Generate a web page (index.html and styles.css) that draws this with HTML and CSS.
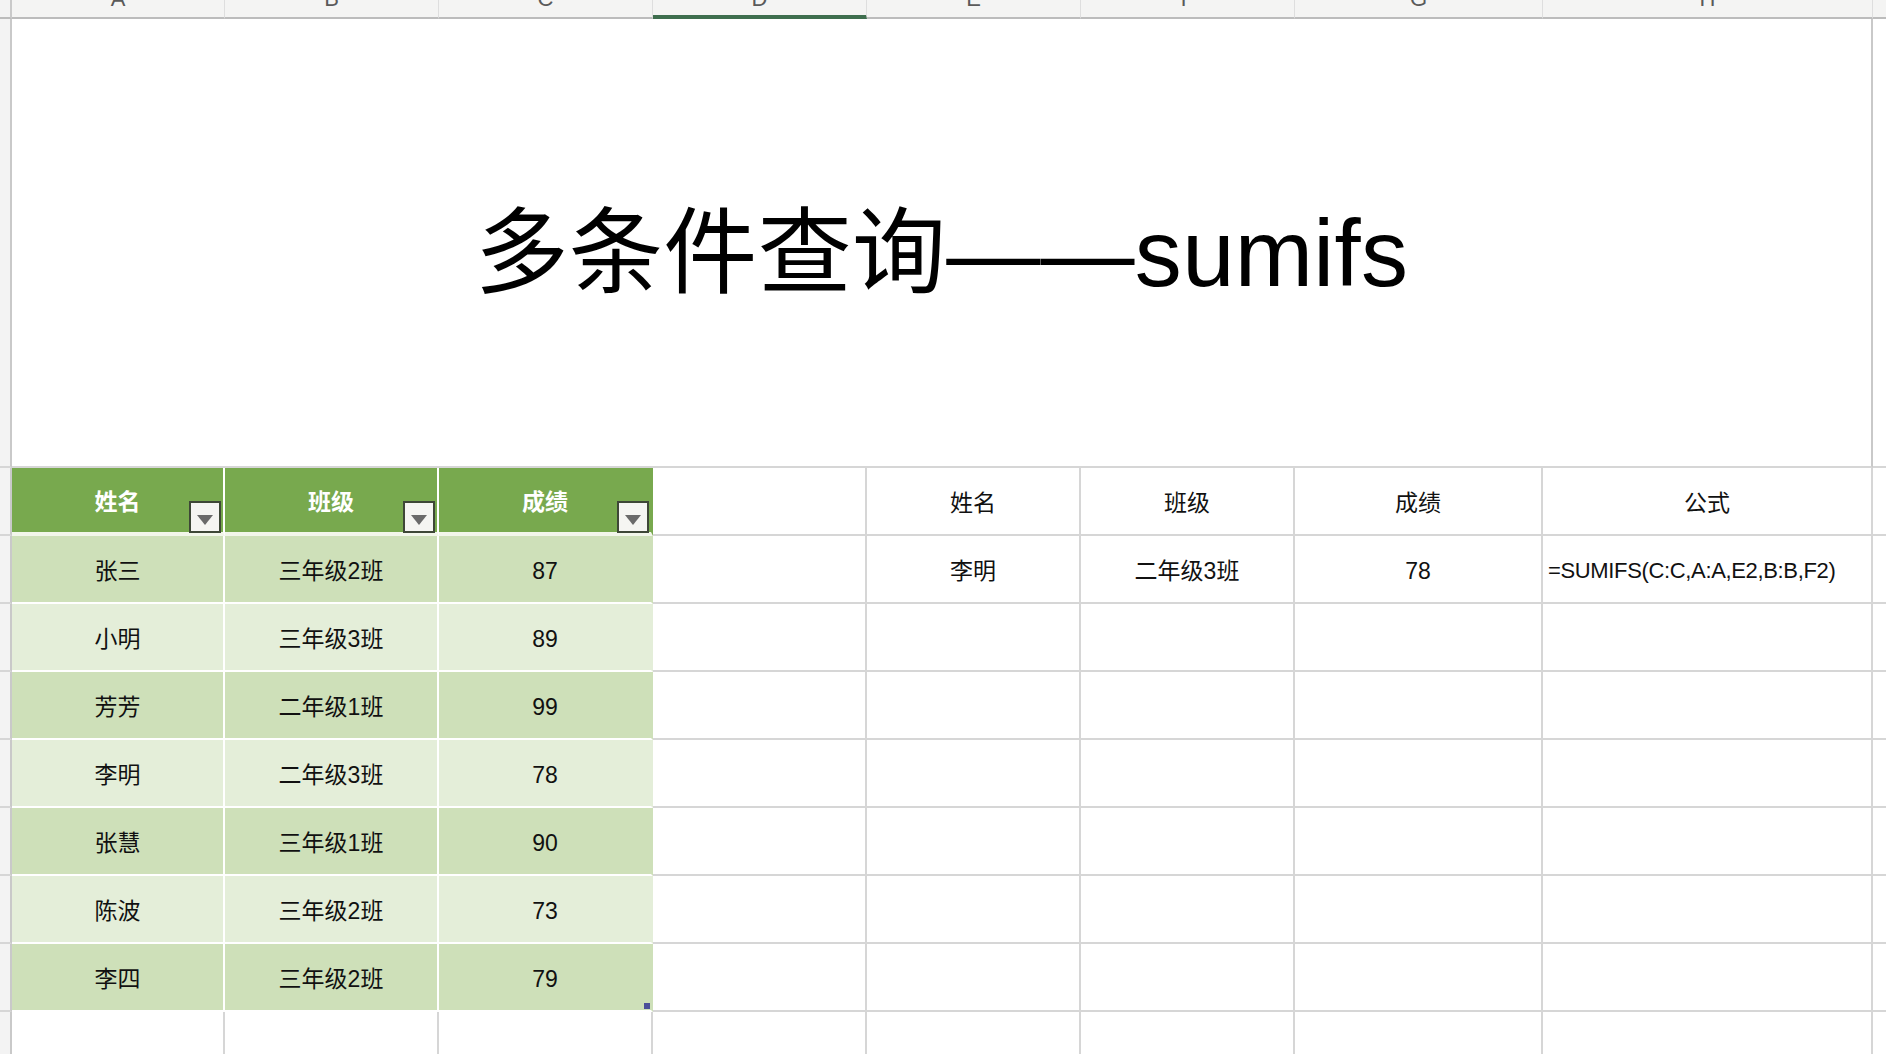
FILE: index.html
```html
<!DOCTYPE html>
<html lang="zh-CN">
<head>
<meta charset="utf-8">
<title>多条件查询——sumifs</title>
<link rel="stylesheet" href="styles.css">
</head>
<body>
<div class="sheet">
  <!-- column header -->
  <div class="rh ch-corner"></div>
  <div class="ch"><span>A</span></div>
  <div class="ch"><span>B</span></div>
  <div class="ch"><span>C</span></div>
  <div class="ch ch-sel"><span>D</span></div>
  <div class="ch"><span>E</span></div>
  <div class="ch"><span>F</span></div>
  <div class="ch"><span>G</span></div>
  <div class="ch"><span>H</span></div>
  <div class="ch ch-tail"></div>

  <!-- title row -->
  <div class="rh"></div>
  <div class="title">多条件查询——sumifs</div>
  <div class="tail"></div>

  <!-- header row -->
  <div class="rh"></div>
  <div class="cell th">姓名<i class="dd"></i></div>
  <div class="cell th">班级<i class="dd"></i></div>
  <div class="cell th edge">成绩<i class="dd"></i></div>
  <div class="cell"></div>
  <div class="cell">姓名</div>
  <div class="cell">班级</div>
  <div class="cell">成绩</div>
  <div class="cell">公式</div>
  <div class="tail"></div>

  <div class="rh"></div>
  <div class="cell td b1">张三</div>
  <div class="cell td b1">三年级2班</div>
  <div class="cell td b1 edge">87</div>
  <div class="cell"></div>
  <div class="cell">李明</div>
  <div class="cell">二年级3班</div>
  <div class="cell">78</div>
  <div class="cell left">=SUMIFS(C:C,A:A,E2,B:B,F2)</div>
  <div class="tail"></div>

  <div class="rh"></div>
  <div class="cell td b2">小明</div>
  <div class="cell td b2">三年级3班</div>
  <div class="cell td b2 edge">89</div>
  <div class="cell"></div><div class="cell"></div><div class="cell"></div><div class="cell"></div><div class="cell"></div>
  <div class="tail"></div>

  <div class="rh"></div>
  <div class="cell td b1">芳芳</div>
  <div class="cell td b1">二年级1班</div>
  <div class="cell td b1 edge">99</div>
  <div class="cell"></div><div class="cell"></div><div class="cell"></div><div class="cell"></div><div class="cell"></div>
  <div class="tail"></div>

  <div class="rh"></div>
  <div class="cell td b2">李明</div>
  <div class="cell td b2">二年级3班</div>
  <div class="cell td b2 edge">78</div>
  <div class="cell"></div><div class="cell"></div><div class="cell"></div><div class="cell"></div><div class="cell"></div>
  <div class="tail"></div>

  <div class="rh"></div>
  <div class="cell td b1">张慧</div>
  <div class="cell td b1">三年级1班</div>
  <div class="cell td b1 edge">90</div>
  <div class="cell"></div><div class="cell"></div><div class="cell"></div><div class="cell"></div><div class="cell"></div>
  <div class="tail"></div>

  <div class="rh"></div>
  <div class="cell td b2">陈波</div>
  <div class="cell td b2">三年级2班</div>
  <div class="cell td b2 edge">73</div>
  <div class="cell"></div><div class="cell"></div><div class="cell"></div><div class="cell"></div><div class="cell"></div>
  <div class="tail"></div>

  <div class="rh"></div>
  <div class="cell td b1">李四</div>
  <div class="cell td b1">三年级2班</div>
  <div class="cell td b1 edge">79<i class="handle"></i></div>
  <div class="cell"></div><div class="cell"></div><div class="cell"></div><div class="cell"></div><div class="cell"></div>
  <div class="tail"></div>

  <div class="rh"></div>
  <div class="cell"></div><div class="cell"></div><div class="cell"></div><div class="cell"></div><div class="cell"></div><div class="cell"></div><div class="cell"></div><div class="cell"></div>
  <div class="tail"></div>
</div>
</body>
</html>
```

FILE: styles.css
```css
html, body {
  margin: 0;
  padding: 0;
  background: #ffffff;
  overflow: hidden;
}

.sheet {
  display: grid;
  grid-template-columns: 12px 213px 214px 214px 214px 214px 214px 248px 330px 13px;
  grid-template-rows: 19px 449px repeat(9, 68px);
  font-family: "Liberation Sans", "Noto Sans CJK SC", sans-serif;
  color: #111111;
  width: 1886px;
  height: 1054px;
  overflow: hidden;
}

.rh {
  background: #f3f3f3;
  border-right: 2px solid #c9c9c9;
  border-bottom: 2px solid #d6d6d6;
  box-sizing: border-box;
}

.ch-corner {
  border-bottom: 2px solid #bcbcbc;
}

.ch {
  background: #f4f4f3;
  border-right: 1px solid #dedede;
  border-bottom: 2px solid #bcbcbc;
  box-sizing: border-box;
  overflow: hidden;
  display: flex;
  justify-content: center;
  position: relative;
}

.ch span {
  font-size: 22px;
  color: #5a5a5a;
  line-height: 22px;
  margin-top: -12px;
}

.ch-sel {
  border-bottom: 4px solid #3f6e4e;
}

.ch-tail {
  border-right: none;
}

.title {
  grid-column: 2 / 10;
  display: flex;
  align-items: center;
  justify-content: center;
  font-size: 94px;
  font-weight: 400;
  color: #000000;
  border-right: 2px solid #c9c9c9;
  border-bottom: 2px solid #d6d6d6;
  box-sizing: border-box;
  padding-top: 4px;
  letter-spacing: 0.3px;
}

.tail {
  border-bottom: 2px solid #d6d6d6;
  box-sizing: border-box;
}

.cell {
  border-right: 2px solid #d6d6d6;
  border-bottom: 2px solid #d6d6d6;
  box-sizing: border-box;
  display: flex;
  align-items: center;
  justify-content: center;
  font-size: 23px;
  line-height: 28px;
  padding-top: 4px;
  position: relative;
  white-space: nowrap;
}

.cell.left {
  justify-content: flex-start;
  padding-left: 5px;
  font-size: 22px;
  letter-spacing: -0.35px;
}

.th {
  background: #78a94e;
  color: #ffffff;
  font-weight: 700;
  border-right: 2px solid #ffffff;
  border-bottom: 4px solid #f2f6ea;
}

.td {
  border-right: 2px solid #ffffff;
  border-bottom: 2px solid #ffffff;
}

.cell.edge {
  border-right-color: transparent;
}

.b1 {
  background: #cee0b9;
}

.b2 {
  background: #e4eed9;
}

.dd {
  position: absolute;
  right: 2px;
  bottom: -1px;
  width: 32px;
  height: 32px;
  box-sizing: border-box;
  background: #f5f5f2;
  border: 2px solid #3e4737;
}

.dd::after {
  content: "";
  position: absolute;
  left: 6px;
  top: 12px;
  border-left: 8px solid transparent;
  border-right: 8px solid transparent;
  border-top: 10px solid #6a6a6a;
}

.handle {
  position: absolute;
  right: 1px;
  bottom: 1px;
  width: 6px;
  height: 6px;
  background: #4c509a;
}
```
